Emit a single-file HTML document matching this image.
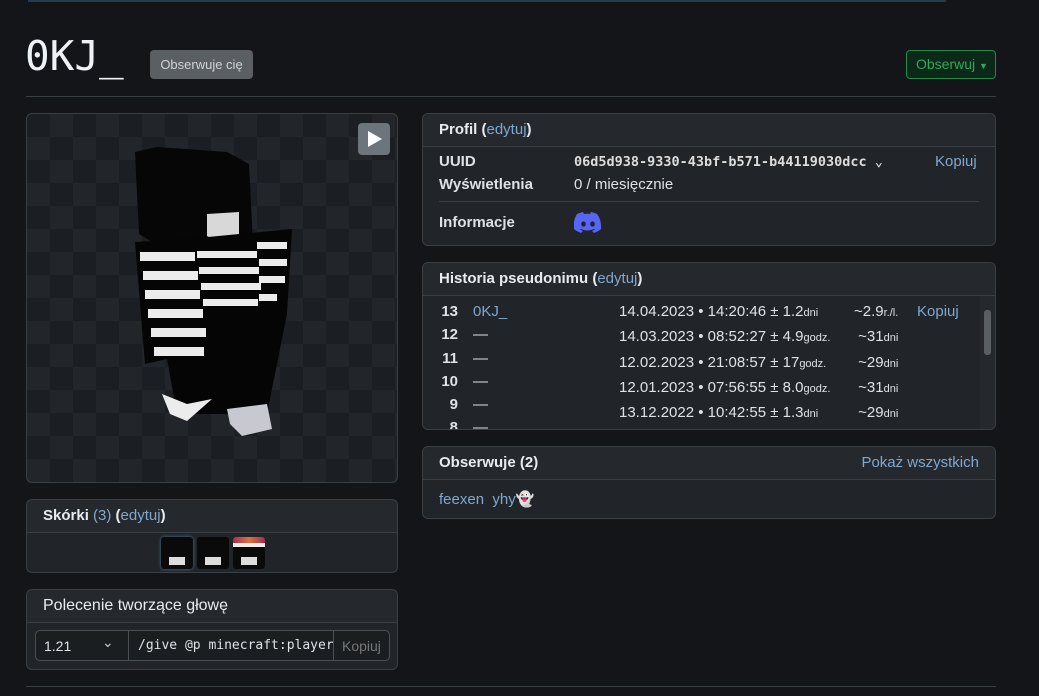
<!DOCTYPE html>
<html><head><meta charset="utf-8"><style>
*{box-sizing:border-box;margin:0;padding:0}
body{width:1039px;height:696px;background:#131519;color:#dee2e6;font-family:"Liberation Sans",sans-serif;font-size:15px;position:relative;overflow:hidden}
.a{position:absolute}
.card{position:absolute;background:#212529;border:1px solid #3a3f44;border-radius:6px;overflow:hidden}
.hd{height:33px;border-bottom:1px solid #3a3f44;padding:7px 16px;font-weight:bold;font-size:15px;color:#e9ecef;background:#25292d}
.lk{color:#7fa7d0;font-weight:normal}
.mono{font-family:"DejaVu Sans Mono","Liberation Mono",monospace}
.row{position:absolute;left:16px;font-size:15px}
sm{font-size:11px}
</style></head><body>
<div class="a" style="left:28px;top:0;width:918px;height:2px;background:#2a3a4e"></div>
<div class="a mono" style="left:25px;top:32px;font-size:41px;color:#eef2f6">0KJ_</div>
<div class="a" style="left:150px;top:50px;width:103px;height:29px;background:#5a5f64;border-radius:4px;color:#d0d3d6;font-size:13px;line-height:29px;text-align:center">Obserwuje cię</div>
<div class="a" style="left:906px;top:50px;width:90px;height:29px;border:1px solid #1f8a4a;background:#0c2818;border-radius:4px;color:#2fa860;font-size:14px;line-height:27px;padding-left:9px">Obserwuj <span style="font-size:9px">▼</span></div>
<div class="a" style="left:26px;top:96px;width:970px;height:1px;background:#3a3f44"></div>

<div class="card" style="left:26px;top:113px;width:372px;height:370px;background-color:#1e2226;background-image:repeating-conic-gradient(#22262b 0 25%,#1b1e22 0 50%);background-size:46px 46px">
 <div class="a" style="left:331px;top:9px;width:32px;height:32px;background:#6c747c;border-radius:4px"><div class="a" style="left:10px;top:8px;border-left:14px solid #fff;border-top:8px solid transparent;border-bottom:8px solid transparent"></div></div>
 <svg class="a" style="left:0;top:0" width="372" height="370">
  <polygon points="108,38 130,33 200,38 222,50 226,130 145,140 112,120" fill="#060606"/>
  <polygon points="180,100 212,98 212,125 195,130 180,122" fill="#d8d8d8"/>
  <polygon points="108,128 160,125 265,115 260,200 240,300 150,300 140,245 118,250" fill="#050505"/>
  <g fill="#ececec">
   <rect x="113" y="138" width="55" height="9"/><rect x="116" y="157" width="55" height="9"/><rect x="118" y="176" width="55" height="9"/><rect x="121" y="195" width="55" height="9"/><rect x="124" y="214" width="55" height="9"/><rect x="127" y="233" width="50" height="9"/>
   <rect x="170" y="137" width="60" height="7"/><rect x="172" y="153" width="60" height="7"/><rect x="174" y="169" width="60" height="7"/><rect x="176" y="185" width="55" height="7"/>
   <rect x="230" y="128" width="30" height="7"/><rect x="232" y="145" width="28" height="7"/><rect x="232" y="162" width="26" height="7"/><rect x="232" y="180" width="18" height="7"/>
   <polygon points="135,280 160,290 185,285 160,307 143,300"/>
   <polygon points="200,295 240,290 245,315 215,322 203,310" fill="#c8c8d0"/>
  </g>
 </svg>
</div>

<div class="card" style="left:26px;top:499px;width:372px;height:74px">
 <div class="hd">Skórki <span class="lk">(3)</span> (<span class="lk">edytuj</span>)</div>
 <div class="a" style="left:134px;top:37px;width:32px;height:32px;background:#0a0a0a;border-radius:3px;box-shadow:0 0 3px #4a7aa0"><div class="a" style="left:8px;top:20px;width:16px;height:8px;background:#ddd"></div></div>
 <div class="a" style="left:170px;top:37px;width:32px;height:32px;background:#0a0a0a;border-radius:3px"><div class="a" style="left:8px;top:20px;width:16px;height:8px;background:#ddd"></div></div>
 <div class="a" style="left:206px;top:37px;width:32px;height:32px;background:#0a0a0a;border-radius:3px;overflow:hidden"><div style="height:6px;background:linear-gradient(90deg,#a03050,#e07040,#a03050)"></div><div style="height:4px;background:#eee"></div><div class="a" style="left:8px;top:20px;width:16px;height:8px;background:#ddd"></div></div>
</div>

<div class="card" style="left:26px;top:589px;width:372px;height:81px">
 <div class="hd" style="font-weight:normal;font-size:16px">Polecenie tworzące głowę</div>
 <div class="a" style="left:8px;top:40px;width:355px;height:31px;border:1px solid #4a4f54;border-radius:5px;background:#1b1e21">
  <div class="a" style="left:8px;top:7px;font-size:14px">1.21</div>
  <div class="a" style="left:66px;top:3px;font-size:14px;color:#ccc">⌄</div>
  <div class="a" style="left:92px;top:0;width:1px;height:29px;background:#4a4f54"></div>
  <div class="a mono" style="left:102px;top:7px;font-size:13px;width:195px;overflow:hidden;white-space:nowrap">/give @p minecraft:player</div>
  <div class="a" style="left:297px;top:0;width:1px;height:29px;background:#4a4f54"></div>
  <div class="a" style="left:306px;top:7px;font-size:14px;color:#777">Kopiuj</div>
 </div>
</div>
<div class="a" style="left:26px;top:686px;width:970px;height:1px;background:#3a3f44"></div>

<div class="card" style="left:422px;top:113px;width:574px;height:133px">
 <div class="hd">Profil (<span class="lk">edytuj</span>)</div>
 <div class="row" style="top:39px;font-weight:bold">UUID</div>
 <div class="a mono" style="left:151px;top:40px;font-size:13.5px;font-weight:bold;color:#ddd">06d5d938-9330-43bf-b571-b44119030dcc ⌄</div>
 <div class="a lk" style="left:512px;top:39px">Kopiuj</div>
 <div class="row" style="top:62px;font-weight:bold">Wyświetlenia</div>
 <div class="a" style="left:151px;top:62px">0 / miesięcznie</div>
 <div class="a" style="left:16px;top:87px;width:540px;height:1px;background:#3a3f44"></div>
 <div class="row" style="top:100px;font-weight:bold">Informacje</div>
 <svg class="a" style="left:151px;top:98px" width="28" height="22" viewBox="0 0 28 22"><path d="M23 2C21 1 19 .5 17 0l-1 2c-2-.3-4-.3-6 0L9 0C7 .5 5 1 3 2 0 7-1 12 0 17c2 2 5 3 7 4l2-2c-1-.4-2-1-3-1.5l1-.5c4 2 9 2 13 0l1 .5c-1 .5-2 1-3 1.5l2 2c2-1 5-2 7-4 .5-6-1-11-4-15z" fill="#5865f2"/><ellipse cx="9.5" cy="12" rx="2.3" ry="2.6" fill="#212529"/><ellipse cx="18.5" cy="12" rx="2.3" ry="2.6" fill="#212529"/></svg>
</div>

<div class="card" style="left:422px;top:262px;width:574px;height:168px">
 <div class="hd">Historia pseudonimu (<span class="lk">edytuj</span>)</div>
 <div style="position:absolute;left:0;top:33px;width:574px;font-size:15px">
  <div class="a" style="left:17px;top:4px;font-weight:bold;line-height:23.3px;text-align:right;width:18px">13<br>12<br>11<br>10<br>9<br>8</div>
  <div class="a" style="left:50px;top:4px;line-height:23.3px"><span class="lk">0KJ_</span><br>—<br>—<br>—<br>—<br>—</div>
  <div class="a" style="left:196px;top:4px;line-height:23.3px;white-space:nowrap">14.04.2023 • 14:20:46 ± 1.2<sm>dni</sm><br>14.03.2023 • 08:52:27 ± 4.9<sm>godz.</sm><br>12.02.2023 • 21:08:57 ± 17<sm>godz.</sm><br>12.01.2023 • 07:56:55 ± 8.0<sm>godz.</sm><br>13.12.2022 • 10:42:55 ± 1.3<sm>dni</sm><br>12.11.2022 • 05:58:01 ± 11<sm>godz.</sm></div>
  <div class="a" style="left:431px;top:4px;line-height:23.3px;white-space:nowrap">~2.9<sm>r./l.</sm><br>&nbsp;~31<sm>dni</sm><br>&nbsp;~29<sm>dni</sm><br>&nbsp;~31<sm>dni</sm><br>&nbsp;~29<sm>dni</sm><br>&nbsp;~31<sm>dni</sm></div>
  <div class="a lk" style="left:494px;top:4px;line-height:23.3px">Kopiuj</div>
 </div>
 <div class="a" style="left:557px;top:33px;width:15px;height:134px;background:#25292d"><div class="a" style="left:4px;top:14px;width:7px;height:45px;background:#5a5f64;border-radius:3px"></div></div>
</div>

<div class="card" style="left:422px;top:446px;width:574px;height:73px">
 <div class="hd">Obserwuje (2)<span class="lk" style="float:right">Pokaż wszystkich</span></div>
 <div class="row lk" style="top:43px">feexen&nbsp; yhy<span style="color:#fff">👻</span></div>
</div>
</body></html>
